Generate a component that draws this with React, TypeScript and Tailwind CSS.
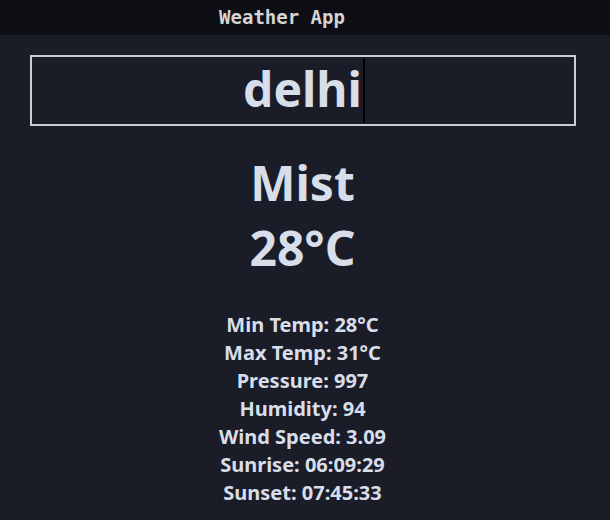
export default function App() {
  const details = [
    'Min Temp: 28°C',
    'Max Temp: 31°C',
    'Pressure: 997',
    'Humidity: 94',
    'Wind Speed: 3.09',
    'Sunrise: 06:09:29',
    'Sunset: 07:45:33',
  ];

  return (
    <div className="min-h-[520px] w-full bg-[#1a1d28] text-[#d8dee9] font-['Noto_Sans',sans-serif]">
      <header className="h-[35px] bg-[#0d0f14] flex items-center justify-center pr-[46px]">
        <span className="font-['DejaVu_Sans_Mono',monospace] font-bold text-[19px] text-[#d4d4d4]">Weather App</span>
      </header>

      <main className="flex flex-col items-center pr-[5px]">
        {/* search box */}
        <div className="mt-5 w-[546px] h-[71px] border-2 border-[#c9cdd6] flex items-center justify-center pl-[3px]">
          <span className="text-[48px] font-bold leading-none pb-1">delhi</span>
          <span className="w-[2px] h-[65px] bg-black ml-[1px]" />
        </div>

        <div className="mt-6 flex flex-col items-center font-bold text-[48px] leading-[65px]">
          <div>Mist</div>
          <div>28°C</div>
        </div>

        <div className="mt-[31px] flex flex-col items-center font-bold text-[20px] leading-[28px]">
          {details.map((d) => (
            <div key={d}>{d}</div>
          ))}
        </div>
      </main>
    </div>
  );
}
